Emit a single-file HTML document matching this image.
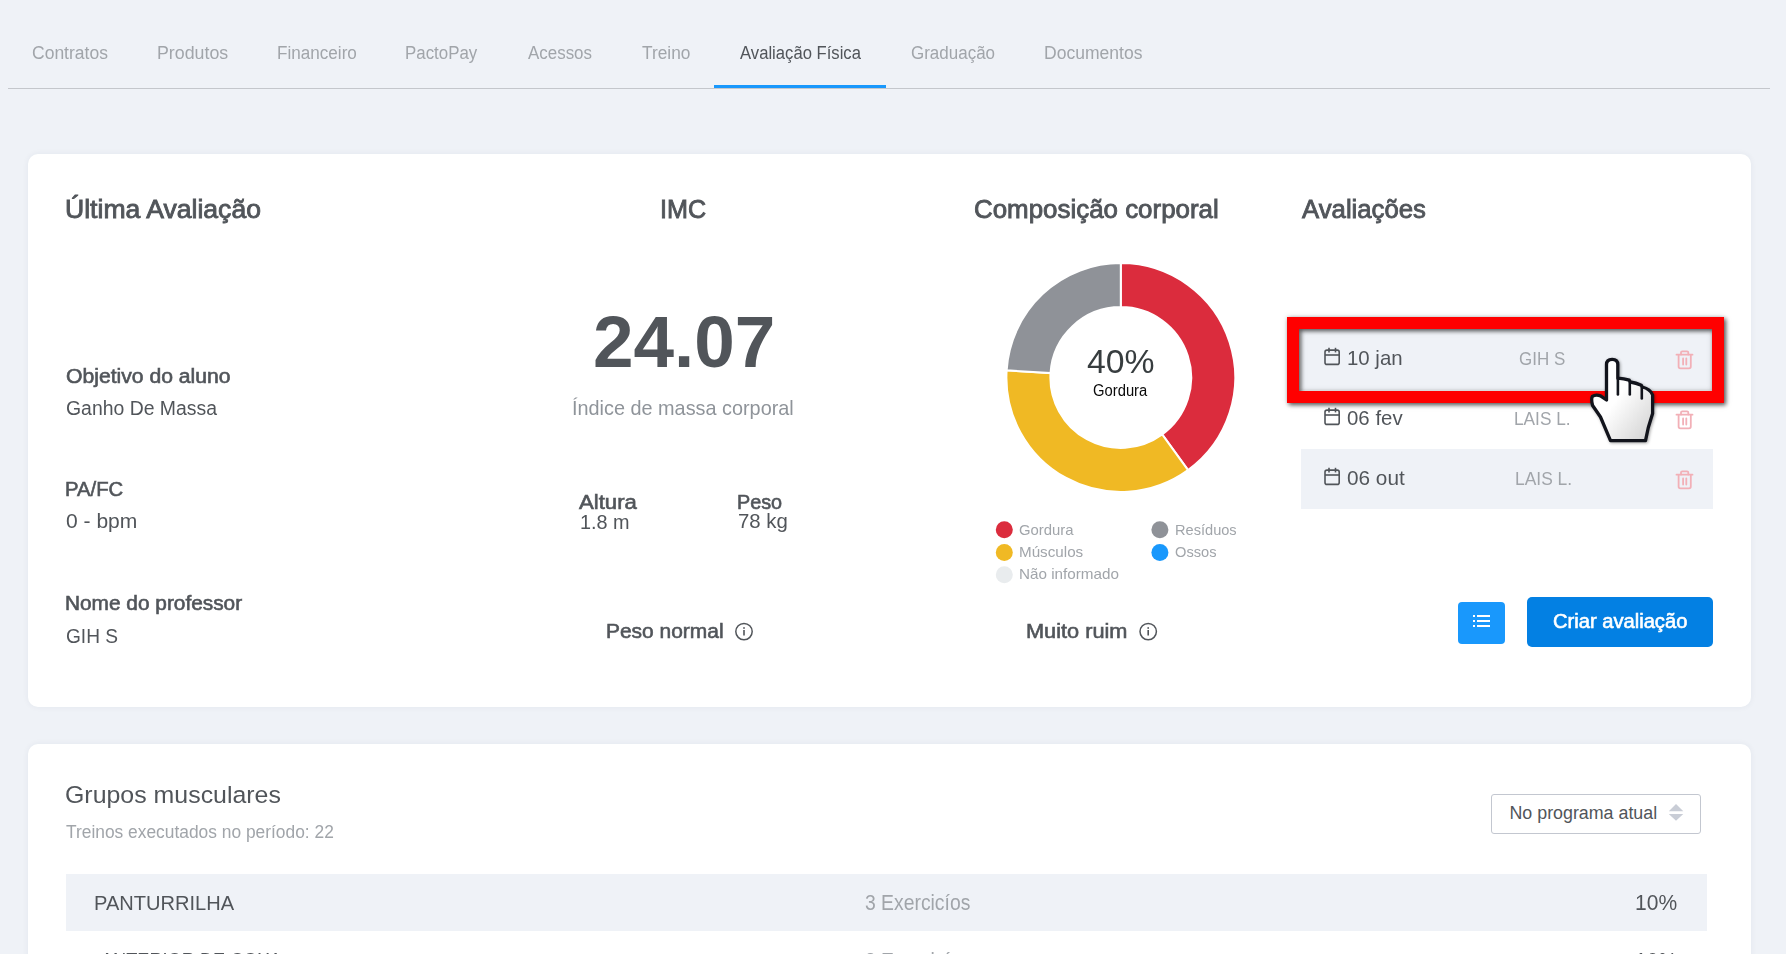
<!DOCTYPE html>
<html><head><meta charset="utf-8">
<style>
html,body{margin:0;padding:0}
body{width:1786px;height:954px;overflow:hidden;background:#eff2f7;position:relative;font-family:"Liberation Sans",sans-serif}
.t{position:absolute;line-height:0;white-space:nowrap;transform-origin:0 0}
.abs{position:absolute}
.card{position:absolute;background:#fff;border-radius:10px;box-shadow:0 0 6px rgba(40,50,80,0.06)}
</style></head>
<body>
<!-- tabs -->
<div class="abs" style="left:8px;top:88px;width:1762px;height:1px;background:#c4c7cc"></div>
<div class="abs" style="left:714px;top:85px;width:172px;height:3px;background:#1998fc"></div>

<!-- card 1 -->
<div class="card" style="left:28px;top:154px;width:1723px;height:553px"></div>
<!-- card 2 -->
<div class="card" style="left:28px;top:744px;width:1723px;height:400px"></div>

<!-- avaliacoes rows -->
<div class="abs" style="left:1301px;top:329px;width:412px;height:61px;background:#eff2f7"></div>
<div class="abs" style="left:1301px;top:449px;width:412px;height:60px;background:#eff2f7"></div>

<!-- card2 row bg -->
<div class="abs" style="left:66px;top:874px;width:1641px;height:57px;background:#eff2f7"></div>

<!-- donut -->
<svg class="abs" style="left:0;top:0" width="1786" height="954">
  <g transform="translate(1120.8,377.5)" stroke="#fff" stroke-width="2" stroke-linejoin="miter">
    <path d="M0.00 -114.40 A114.4 114.4 0 0 1 67.24 92.55 L41.38 56.95 A70.4 70.4 0 0 0 0.00 -70.40 Z" fill="#db2c3d"/>
    <path d="M67.24 92.55 A114.4 114.4 0 0 1 -114.17 -7.18 L-70.26 -4.42 A70.4 70.4 0 0 0 41.38 56.95 Z" fill="#f0b924"/>
    <path d="M-114.17 -7.18 A114.4 114.4 0 0 1 -0.00 -114.40 L-0.00 -70.40 A70.4 70.4 0 0 0 -70.26 -4.42 Z" fill="#8f9298"/>
  </g>
  <!-- legend dots -->
  <circle cx="1004.3" cy="529.8" r="8.5" fill="#db2c3d"/>
  <circle cx="1004.3" cy="552.4" r="8.5" fill="#f0b924"/>
  <circle cx="1004.3" cy="574.7" r="8.5" fill="#e9ecee"/>
  <circle cx="1159.9" cy="529.8" r="8.5" fill="#8f9298"/>
  <circle cx="1159.9" cy="552.4" r="8.5" fill="#1998fc"/>
  <!-- info icons -->
  <g fill="none" stroke="#51555a" stroke-width="1.5">
    <circle cx="744" cy="631.6" r="8.2"/>
    <circle cx="1148.2" cy="631.6" r="8.2"/>
  </g>
  <g fill="#51555a">
    <rect x="743.2" y="630" width="1.6" height="5.5"/>
    <rect x="743.2" y="627.2" width="1.6" height="1.6"/>
    <rect x="1147.4" y="630" width="1.6" height="5.5"/>
    <rect x="1147.4" y="627.2" width="1.6" height="1.6"/>
  </g>
  <!-- calendar icons -->
  <g fill="none" stroke="#51555a" stroke-width="1.6">
    <g transform="translate(0,0)">
      <rect x="1325" y="350.1" width="14.2" height="14.3" rx="2"/>
      <line x1="1325" y1="355" x2="1339.2" y2="355"/>
      <line x1="1329" y1="347.8" x2="1329" y2="352.4"/>
      <line x1="1335.5" y1="347.8" x2="1335.5" y2="352.4"/>
    </g>
    <g transform="translate(0,60)">
      <rect x="1325" y="350.1" width="14.2" height="14.3" rx="2"/>
      <line x1="1325" y1="355" x2="1339.2" y2="355"/>
      <line x1="1329" y1="347.8" x2="1329" y2="352.4"/>
      <line x1="1335.5" y1="347.8" x2="1335.5" y2="352.4"/>
    </g>
    <g transform="translate(0,120)">
      <rect x="1325" y="350.1" width="14.2" height="14.3" rx="2"/>
      <line x1="1325" y1="355" x2="1339.2" y2="355"/>
      <line x1="1329" y1="347.8" x2="1329" y2="352.4"/>
      <line x1="1335.5" y1="347.8" x2="1335.5" y2="352.4"/>
    </g>
  </g>
  <!-- trash icons -->
  <g fill="none" stroke="#f2b0b7" stroke-width="1.8" stroke-linecap="round">
    <g transform="translate(0,-60)">
      <line x1="1676.5" y1="414.7" x2="1692.5" y2="414.7"/>
      <path d="M1681 414.5 V412.5 Q1681 411.3 1682.3 411.3 H1687 Q1688.3 411.3 1688.3 412.5 V414.5"/>
      <path d="M1678.6 415 V426.5 Q1678.6 428.3 1680.4 428.3 H1689 Q1690.8 428.3 1690.8 426.5 V415"/>
      <line x1="1683.1" y1="418.5" x2="1683.1" y2="424.5"/>
      <line x1="1686.3" y1="418.5" x2="1686.3" y2="424.5"/>
    </g>
    <g transform="translate(0,0)">
      <line x1="1676.5" y1="414.7" x2="1692.5" y2="414.7"/>
      <path d="M1681 414.5 V412.5 Q1681 411.3 1682.3 411.3 H1687 Q1688.3 411.3 1688.3 412.5 V414.5"/>
      <path d="M1678.6 415 V426.5 Q1678.6 428.3 1680.4 428.3 H1689 Q1690.8 428.3 1690.8 426.5 V415"/>
      <line x1="1683.1" y1="418.5" x2="1683.1" y2="424.5"/>
      <line x1="1686.3" y1="418.5" x2="1686.3" y2="424.5"/>
    </g>
    <g transform="translate(0,60)">
      <line x1="1676.5" y1="414.7" x2="1692.5" y2="414.7"/>
      <path d="M1681 414.5 V412.5 Q1681 411.3 1682.3 411.3 H1687 Q1688.3 411.3 1688.3 412.5 V414.5"/>
      <path d="M1678.6 415 V426.5 Q1678.6 428.3 1680.4 428.3 H1689 Q1690.8 428.3 1690.8 426.5 V415"/>
      <line x1="1683.1" y1="418.5" x2="1683.1" y2="424.5"/>
      <line x1="1686.3" y1="418.5" x2="1686.3" y2="424.5"/>
    </g>
  </g>
</svg>

<!-- buttons -->
<div class="abs" style="left:1458px;top:602px;width:47px;height:42px;border-radius:4px;background:#1998fc"></div>
<svg class="abs" style="left:0;top:0" width="1786" height="954">
  <g fill="#fff">
    <rect x="1473" y="615" width="2" height="2"/>
    <rect x="1473" y="620" width="2" height="2"/>
    <rect x="1473" y="625" width="2" height="2"/>
    <rect x="1477" y="615" width="13" height="2"/>
    <rect x="1477" y="620" width="13" height="2"/>
    <rect x="1477" y="625" width="13" height="2"/>
  </g>
</svg>
<div class="abs" style="left:1527px;top:597px;width:186px;height:50px;border-radius:5px;background:#0380e3"></div>

<!-- select -->
<div class="abs" style="left:1491px;top:794px;width:208px;height:38px;border:1px solid #c3c7d0;border-radius:3px;background:#fff"></div>

<svg class="abs" style="left:0;top:0" width="1786" height="954"><path d="M1668.8 811.3 L1676 804 L1683.3 811.3 Z M1668.8 814 L1676 820.8 L1683.3 814 Z" fill="#c9cdd6"/></svg>
<span class="t" style="left:32.42px;top:52.72px;font-size:18.41px;font-weight:400;color:#a1a5aa;transform:scaleX(0.9512)">Contratos</span>
<span class="t" style="left:156.78px;top:52.72px;font-size:18.41px;font-weight:400;color:#a1a5aa;transform:scaleX(0.9659)">Produtos</span>
<span class="t" style="left:276.73px;top:52.72px;font-size:18.41px;font-weight:400;color:#a1a5aa;transform:scaleX(0.9296)">Financeiro</span>
<span class="t" style="left:405.05px;top:52.72px;font-size:18.41px;font-weight:400;color:#a1a5aa;transform:scaleX(0.9171)">PactoPay</span>
<span class="t" style="left:528.40px;top:52.72px;font-size:18.41px;font-weight:400;color:#a1a5aa;transform:scaleX(0.9202)">Acessos</span>
<span class="t" style="left:641.65px;top:52.72px;font-size:18.41px;font-weight:400;color:#a1a5aa;transform:scaleX(0.9395)">Treino</span>
<span class="t" style="left:740.00px;top:52.72px;font-size:18.41px;font-weight:400;color:#51555a;transform:scaleX(0.9047)">Avaliação Física</span>
<span class="t" style="left:910.55px;top:52.72px;font-size:18.41px;font-weight:400;color:#a1a5aa;transform:scaleX(0.9231)">Graduação</span>
<span class="t" style="left:1043.60px;top:52.72px;font-size:18.41px;font-weight:400;color:#a1a5aa;transform:scaleX(0.9526)">Documentos</span>
<span class="t" style="left:64.94px;top:208.96px;font-size:25.22px;font-weight:400;-webkit-text-stroke:0.85px #51555a;color:#51555a;transform:scaleX(1.0538)">Última Avaliação</span>
<span class="t" style="left:659.83px;top:208.96px;font-size:25.22px;font-weight:400;-webkit-text-stroke:0.85px #51555a;color:#51555a;transform:scaleX(0.9990)">IMC</span>
<span class="t" style="left:973.51px;top:208.96px;font-size:25.22px;font-weight:400;-webkit-text-stroke:0.85px #51555a;color:#51555a;transform:scaleX(1.0270)">Composição corporal</span>
<span class="t" style="left:1301.80px;top:208.96px;font-size:25.22px;font-weight:400;-webkit-text-stroke:0.85px #51555a;color:#51555a;transform:scaleX(1.0204)">Avaliações</span>
<span class="t" style="left:65.85px;top:376.22px;font-size:19.57px;font-weight:400;-webkit-text-stroke:0.59px #51555a;color:#51555a;transform:scaleX(1.0810)">Objetivo do aluno</span>
<span class="t" style="left:65.08px;top:488.97px;font-size:19.42px;font-weight:400;-webkit-text-stroke:0.58px #51555a;color:#51555a;transform:scaleX(1.0454)">PA/FC</span>
<span class="t" style="left:65.03px;top:603.07px;font-size:19.42px;font-weight:400;-webkit-text-stroke:0.58px #51555a;color:#51555a;transform:scaleX(1.0732)">Nome do professor</span>
<span class="t" style="left:579.00px;top:502.02px;font-size:19.57px;font-weight:400;-webkit-text-stroke:0.59px #51555a;color:#51555a;transform:scaleX(1.1331)">Altura</span>
<span class="t" style="left:737.42px;top:502.02px;font-size:19.57px;font-weight:400;-webkit-text-stroke:0.59px #51555a;color:#51555a;transform:scaleX(1.0113)">Peso</span>
<span class="t" style="left:606.22px;top:631.07px;font-size:19.71px;font-weight:400;-webkit-text-stroke:0.59px #51555a;color:#51555a;transform:scaleX(1.0636)">Peso normal</span>
<span class="t" style="left:1025.86px;top:630.97px;font-size:19.42px;font-weight:400;-webkit-text-stroke:0.58px #51555a;color:#51555a;transform:scaleX(1.1199)">Muito ruim</span>
<span class="t" style="left:65.73px;top:408.12px;font-size:19.57px;font-weight:400;color:#51555a;transform:scaleX(0.9918)">Ganho De Massa</span>
<span class="t" style="left:65.57px;top:522.12px;font-size:19.29px;font-weight:400;color:#51555a;transform:scaleX(1.0914)">0 - bpm</span>
<span class="t" style="left:65.74px;top:636.12px;font-size:19.57px;font-weight:400;color:#51555a;transform:scaleX(0.9774)">GIH S</span>
<span class="t" style="left:579.61px;top:522.02px;font-size:19.57px;font-weight:400;color:#51555a;transform:scaleX(1.0145)">1.8 m</span>
<span class="t" style="left:738.28px;top:522.12px;font-size:19.29px;font-weight:400;color:#51555a;transform:scaleX(1.0569)">78 kg</span>
<span class="t" style="left:592.71px;top:342.30px;font-size:71.57px;font-weight:700;color:#51555a;transform:scaleX(1.0185)">24.07</span>
<span class="t" style="left:572.11px;top:408.27px;font-size:19.42px;font-weight:400;color:#8f949a;transform:scaleX(1.0228)">Índice de massa corporal</span>
<span class="t" style="left:1087.32px;top:361.72px;font-size:33.14px;font-weight:400;color:#373d3f;transform:scaleX(1.0200)">40%</span>
<span class="t" style="left:1093.46px;top:390.60px;font-size:15.57px;font-weight:400;color:#0a0a0a;transform:scaleX(0.9503)">Gordura</span>
<span class="t" style="left:1019.06px;top:529.58px;font-size:14.78px;font-weight:400;color:#a1a5aa;transform:scaleX(1.0066)">Gordura</span>
<span class="t" style="left:1018.58px;top:552.08px;font-size:14.78px;font-weight:400;color:#a1a5aa;transform:scaleX(1.0294)">Músculos</span>
<span class="t" style="left:1018.58px;top:574.38px;font-size:14.78px;font-weight:400;color:#a1a5aa;transform:scaleX(1.0321)">Não informado</span>
<span class="t" style="left:1174.73px;top:529.65px;font-size:14.57px;font-weight:400;color:#a1a5aa;transform:scaleX(1.0024)">Resíduos</span>
<span class="t" style="left:1175.31px;top:552.15px;font-size:14.57px;font-weight:400;color:#a1a5aa;transform:scaleX(1.0056)">Ossos</span>
<span class="t" style="left:1347.37px;top:358.17px;font-size:20.29px;font-weight:400;color:#51555a;transform:scaleX(1.0055)">10 jan</span>
<span class="t" style="left:1347.19px;top:417.82px;font-size:19.86px;font-weight:400;color:#51555a;transform:scaleX(1.0281)">06 fev</span>
<span class="t" style="left:1347.28px;top:477.82px;font-size:19.86px;font-weight:400;color:#51555a;transform:scaleX(1.0447)">06 out</span>
<span class="t" style="left:1518.55px;top:358.77px;font-size:18.55px;font-weight:400;color:#a1a5aa;transform:scaleX(0.9163)">GIH S</span>
<span class="t" style="left:1514.12px;top:418.57px;font-size:18.26px;font-weight:400;color:#a1a5aa;transform:scaleX(0.9450)">LAIS L.</span>
<span class="t" style="left:1514.81px;top:478.57px;font-size:18.26px;font-weight:400;color:#a1a5aa;transform:scaleX(0.9538)">LAIS L.</span>
<span class="t" style="left:1552.99px;top:620.92px;font-size:19.86px;font-weight:400;-webkit-text-stroke:0.60px #ffffff;color:#ffffff;transform:scaleX(1.0143)">Criar avaliação</span>
<span class="t" style="left:65.05px;top:795.49px;font-size:24.57px;font-weight:400;color:#51555a;transform:scaleX(1.0139)">Grupos musculares</span>
<span class="t" style="left:65.65px;top:831.57px;font-size:17.68px;font-weight:400;color:#a1a5aa;transform:scaleX(0.9829)">Treinos executados no período: 22</span>
<span class="t" style="left:1509.47px;top:812.82px;font-size:17.83px;font-weight:400;color:#51555a;transform:scaleX(1.0000)">No programa atual</span>
<span class="t" style="left:94.49px;top:903.22px;font-size:20.72px;font-weight:400;color:#51555a;transform:scaleX(0.9685)">PANTURRILHA</span>
<span class="t" style="left:864.92px;top:902.87px;font-size:21.45px;font-weight:400;color:#a1a5aa;transform:scaleX(0.9019)">3 Exercicíos</span>
<span class="t" style="left:1634.53px;top:902.92px;font-size:21.88px;font-weight:400;color:#51555a;transform:scaleX(0.9608)">10%</span>
<span class="t" style="left:101.20px;top:960.32px;font-size:20.72px;font-weight:400;color:#51555a;transform:scaleX(0.8769)">ANTERIOR DE COXA</span>
<span class="t" style="left:864.92px;top:960.57px;font-size:21.45px;font-weight:400;color:#a1a5aa;transform:scaleX(0.9019)">3 Exercicíos</span>
<span class="t" style="left:1634.53px;top:960.67px;font-size:21.74px;font-weight:400;color:#51555a;transform:scaleX(0.9672)">10%</span>

<!-- red frame -->
<div class="abs" style="left:1287px;top:317px;width:413px;height:62px;border:12px solid #ff0000;filter:drop-shadow(2px 2px 2px rgba(0,0,0,0.6)) drop-shadow(0 0 2.5px rgba(0,0,0,0.18))"></div>

<!-- hand cursor -->
<svg class="abs" style="left:0;top:0;filter:drop-shadow(1px 1px 1.5px rgba(0,0,0,0.35))" width="1786" height="954">
  <defs>
    <linearGradient id="hg" x1="0" y1="0" x2="1" y2="1">
      <stop offset="0.45" stop-color="#ffffff"/>
      <stop offset="1" stop-color="#cfcfcf"/>
    </linearGradient>
  </defs>
  <path d="M1606.5 398 V364.5 Q1606.5 359.3 1612.15 359.3 Q1617.8 359.3 1617.8 364.5 V378.2 Q1624 378.6 1629.3 380.2 L1630.3 382 Q1636 382.8 1641.3 385.2 L1642.3 387 Q1650.3 389 1652.6 395 V413.5 L1648.3 427.5 L1645.5 440.6 H1610.5 L1600.5 417 L1592.6 405.5 Q1590.9 399 1592.4 396.4 Q1595.5 394.3 1600.5 395.8 L1606.5 400 Z" fill="url(#hg)" stroke="#12141c" stroke-width="3.3" stroke-linejoin="round"/>
  <g stroke="#12141c" stroke-width="2.6" stroke-linecap="round">
    <line x1="1617.9" y1="379" x2="1617.9" y2="394.5"/>
    <line x1="1629.8" y1="381.5" x2="1629.8" y2="394.5"/>
    <line x1="1641.8" y1="386" x2="1641.8" y2="398.5"/>
  </g>
</svg>
</body></html>
